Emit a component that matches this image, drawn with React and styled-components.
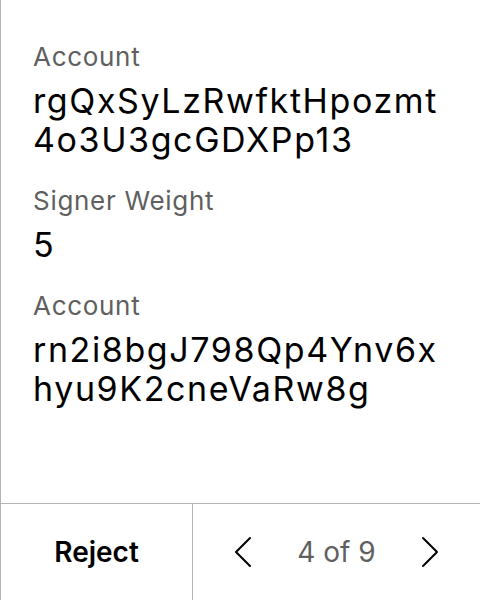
import React from "react";
import styled, { createGlobalStyle } from "styled-components";

const GlobalStyle = createGlobalStyle`
	html, body {
		margin: 0;
		padding: 0;
		background: #fff;
	}
	body {
		font-family: Inter, "Noto Sans", sans-serif;
		color: #000;
	}
`;

const Screen = styled.div`
	width: 480px;
	height: 600px;
	box-sizing: border-box;
	border-left: 1px solid #b3b3b3;
	display: flex;
	flex-direction: column;
`;

const Body = styled.div`
	flex: 1;
	padding: 41px 32px 0 32px;
	display: flex;
	flex-direction: column;
	gap: 26px;
`;

const Field = styled.div`
	display: flex;
	flex-direction: column;
	gap: 8px;
`;

const Label = styled.div`
	font-size: 26px;
	line-height: 32px;
	letter-spacing: 0.7px;
	color: #5f5f5f;
`;

const Value = styled.div`
	font-size: 34px;
	line-height: 39px;
	letter-spacing: 1.6px;
	color: #000;
	word-break: break-all;
`;

const Footer = styled.div`
	height: 96px;
	border-top: 1px solid #b3b3b3;
	display: grid;
	grid-template-columns: 192px 1fr;
`;

const RejectButton = styled.button`
	border: none;
	border-right: 1px solid #b3b3b3;
	background: none;
	font-family: inherit;
	font-size: 28px;
	font-weight: 600;
	color: #000;
	padding: 0;
`;

const Pager = styled.div`
	display: flex;
	align-items: center;
	justify-content: space-between;
	padding: 0 38px;
`;

const NavButton = styled.button`
	border: none;
	background: none;
	padding: 0;
	width: 24px;
	height: 40px;
	display: flex;
	align-items: center;
	justify-content: center;
`;

const PageText = styled.span`
	font-size: 28px;
	color: #5f5f5f;
`;

const Chevron = ({ dir }) => (
	<svg width="18" height="32" viewBox="0 0 18 32" fill="none">
		<path
			d={dir === "left" ? "M16 2 L2 16 L16 30" : "M2 2 L16 16 L2 30"}
			stroke="#000"
			strokeWidth="2"
			strokeLinecap="round"
			strokeLinejoin="round"
		/>
	</svg>
);

const fields = [
	{ label: "Account", value: "rgQxSyLzRwfktHpozmt4o3U3gcGDXPp13" },
	{ label: "Signer Weight", value: "5" },
	{ label: "Account", value: "rn2i8bgJ798Qp4Ynv6xhyu9K2cneVaRw8g" },
];

const App = () => {
	return (
		<>
			<GlobalStyle />
			<Screen>
				<Body>
					{fields.map((f, i) => (
						<Field key={i}>
							<Label>{f.label}</Label>
							<Value>{f.value}</Value>
						</Field>
					))}
				</Body>
				<Footer>
					<RejectButton>Reject</RejectButton>
					<Pager>
						<NavButton>
							<Chevron dir="left" />
						</NavButton>
						<PageText>4 of 9</PageText>
						<NavButton>
							<Chevron dir="right" />
						</NavButton>
					</Pager>
				</Footer>
			</Screen>
		</>
	);
};

export default App;
